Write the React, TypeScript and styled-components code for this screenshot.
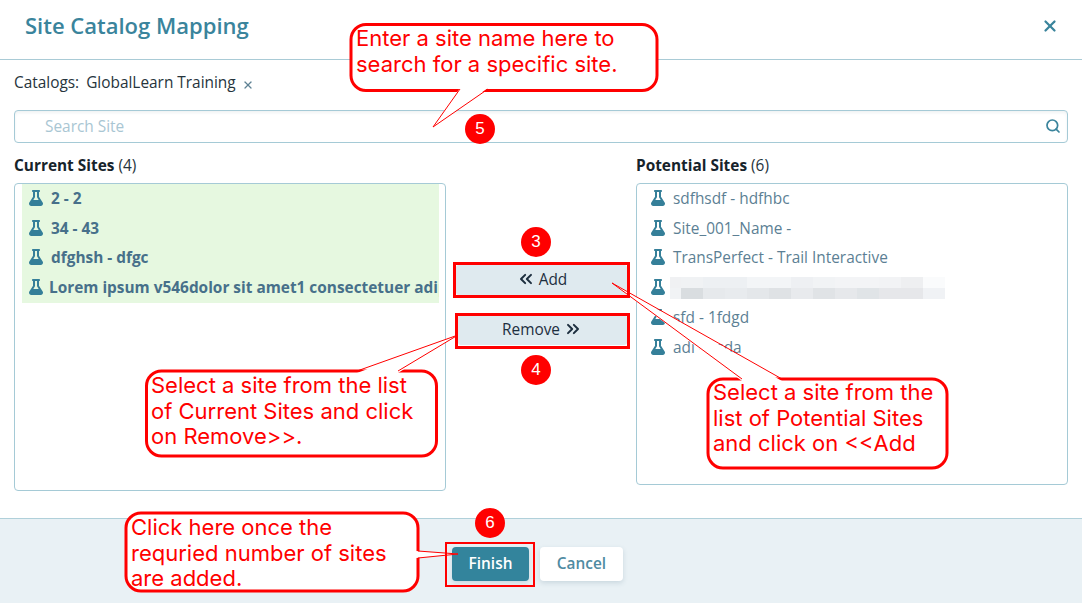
import React from "react";
import styled, { createGlobalStyle } from "styled-components";
import { FaFlask } from "react-icons/fa";
import { ChevronsLeft, ChevronsRight, Search, X } from "lucide-react";

const GlobalStyle = createGlobalStyle`
  html, body {
    margin: 0;
    padding: 0;
    background: #fff;
    font-family: "Open Sans", "Liberation Sans", sans-serif;
  }
  * { box-sizing: border-box; }
`;

const Page = styled.div`
  position: relative;
  width: 1082px;
  height: 603px;
  overflow: hidden;
  display: flex;
  flex-direction: column;
`;

const Header = styled.header`
  height: 60px;
  flex: none;
  display: flex;
  align-items: flex-start;
  justify-content: space-between;
  padding: 10px 23px 0 25px;
  border-bottom: 1px solid #a9cbd6;
`;

const Title = styled.h1`
  margin: 0;
  font-size: 22px;
  line-height: 30px;
  font-weight: 600;
  color: #3a849c;
`;

const CloseButton = styled.span`
  display: flex;
  margin-top: 7px;
  color: #3a849c;
`;

const Body = styled.main`
  flex: 1;
  padding: 0 14px;
`;

const CatalogRow = styled.div`
  display: flex;
  align-items: center;
  height: 20px;
  margin-top: 13px;
  padding-bottom: 1px;
  font-size: 15.4px;
  color: #26343c;
`;

const CatalogName = styled.span`
  margin-left: 7px;
`;

const CatalogRemove = styled.span`
  display: flex;
  margin: 4px 0 0 6px;
  color: #5f8294;
`;

const SearchBox = styled.div`
  position: relative;
  margin-top: 17px;
  height: 33px;
`;

const SearchInput = styled.input`
  width: 100%;
  height: 100%;
  padding: 0 30px 1px;
  border: 1px solid #a5cad6;
  border-radius: 4px;
  box-shadow: inset 0 2px 3px rgba(60, 100, 120, 0.08);
  font-family: inherit;
  font-size: 15.4px;
  outline: none;

  &::placeholder {
    color: #a9c6d3;
    opacity: 1;
  }
`;

const SearchIcon = styled.span`
  position: absolute;
  right: 7px;
  top: 8px;
  display: flex;
  color: #3a849c;
`;

const Columns = styled.div`
  display: grid;
  grid-template-columns: 432px 190px 432px;
  align-items: start;
  margin-top: 13px;
`;

const ColumnLabel = styled.div`
  height: 20px;
  margin-bottom: 7px;
  font-size: 15.4px;
  line-height: 19px;
  color: #26343c;

  b {
    font-weight: 700;
    color: #16232b;
  }
`;

const SiteList = styled.div<{ $height: number }>`
  height: ${(p) => p.$height}px;
  padding: 0 6px 0 7px;
  border: 1px solid #a5cad6;
  border-radius: 4px;
  overflow: hidden;
`;

const SiteRow = styled.div<{ $current?: boolean; $tight?: boolean }>`
  display: flex;
  align-items: center;
  gap: ${(p) => (p.$tight ? 6 : 8)}px;
  height: 29.8px;
  padding: 0 0 1px 7px;
  white-space: nowrap;
  overflow: hidden;
  font-size: 15.4px;
  font-weight: ${(p) => (p.$current ? 700 : 400)};
  color: ${(p) => (p.$current ? "#47708a" : "#5c7f94")};
  background: ${(p) => (p.$current ? "#e6f8e0" : "transparent")};

  svg {
    flex: none;
    width: 14px;
    height: 16px;
    margin-top: -1px;
    color: #357f99;
  }
`;

const BlurGrid = styled.div`
  display: grid;
  grid-template-columns: 11px repeat(12, 22px);
  grid-auto-rows: 11px;
  margin-left: -3px;
`;

const BlurCell = styled.span<{ $shade: string }>`
  background: ${(p) => p.$shade};
`;

const MoveColumn = styled.div`
  display: flex;
  flex-direction: column;
  align-items: flex-end;
  gap: 20px;
  padding: 109px 9px 0 0;
`;

const MoveButton = styled.button<{ $width: number }>`
  display: flex;
  align-items: center;
  justify-content: center;
  gap: 3px;
  width: ${(p) => p.$width}px;
  height: 30px;
  padding: 0 0 2px;
  border: none;
  border-radius: 3px;
  background: #dfeaef;
  font-family: inherit;
  font-size: 15.4px;
  font-weight: 500;
  color: #1d2f3f;
`;

const Footer = styled.footer`
  flex: none;
  height: 85px;
  display: flex;
  align-items: flex-start;
  gap: 11px;
  padding: 28px 0 0 452px;
  background: #e9f1f5;
  border-top: 1px solid #b0d0da;
`;

const FooterButton = styled.button<{ $primary?: boolean }>`
  height: 34px;
  width: ${(p) => (p.$primary ? 77 : 83)}px;
  padding: 0 0 2px;
  border: none;
  border-radius: 4px;
  font-family: inherit;
  font-size: 15.4px;
  font-weight: 600;
  background: ${(p) => (p.$primary ? "#33849c" : "#fff")};
  color: ${(p) => (p.$primary ? "#fff" : "#4f8ba2")};
  box-shadow: 0 2px 5px rgba(60, 100, 120, 0.18);
`;

const MarkupLayer = styled.svg`
  position: absolute;
  inset: 0;
  pointer-events: none;
`;

const CalloutText = styled.div<{ $left: number; $top: number }>`
  position: absolute;
  left: ${(p) => p.$left}px;
  top: ${(p) => p.$top}px;
  font-family: Inter, "Open Sans", sans-serif;
  font-size: 22px;
  line-height: 25.5px;
  color: #ff0000;
  white-space: pre;
`;

const StepBadge = styled.span<{ $left: number; $top: number }>`
  position: absolute;
  left: ${(p) => p.$left - 15}px;
  top: ${(p) => p.$top - 15}px;
  width: 30px;
  height: 30px;
  display: flex;
  align-items: center;
  justify-content: center;
  border-radius: 50%;
  background: #ff0000;
  color: #fff;
  font-family: "Liberation Sans", sans-serif;
  font-size: 17px;
`;

const currentSites = ["2 - 2", "34 - 43", "dfghsh - dfgc"];
const potentialTop = ["sdfhsdf - hdfhbc", "Site_001_Name -", "TransPerfect - Trail Interactive"];
const potentialBottom = ["sfd - 1fdgd", "adi - asda"];

const blurShades = [
  "#f0f1f3", "#f0f2f4", "#edf0f3", "#edf0f3", "#f3f5f7", "#f3f5f7", "#eef0f3",
  "#f1f3f5", "#f3f4f6", "#f3f4f6", "#f2f3f5", "#eeeff1", "#fafbfc",
  "#f1f3f5", "#d9dde0", "#e6e9ec", "#e8ebee", "#e4e7ea", "#dfe2e5", "#e8eaed",
  "#e0e3e6", "#e6e8eb", "#e0e4e7", "#e6e7ea", "#e6e7ea", "#f0f2f5",
];

// box = rounded outline, cover = what the tail wipes from it, tail = the thin tail lines
const bubbles = [
  { box: [351, 24.5, 306, 66], cover: "460,88 433,127 488,88", tail: "460,89 433,127 488,89" },
  { box: [146.5, 371, 290, 85], cover: "357,373 458,335 398,373", tail: "357,371 458,335 398,371" },
  { box: [708, 379, 239, 89], cover: "742,381 612,283 782,381", tail: "742,379 612,283 782,379" },
  { box: [126, 513, 292, 78], cover: "416,551 458,554 416,558", tail: "418,551 458,554 418,558" },
];

const App = () => {
  return (
    <Page>
      <GlobalStyle />
      <Header>
        <Title>Site Catalog Mapping</Title>
        <CloseButton>
          <X size={18} strokeWidth={3} />
        </CloseButton>
      </Header>

      <Body>
        <CatalogRow>
          Catalogs:
          <CatalogName>GlobalLearn Training</CatalogName>
          <CatalogRemove>
            <X size={12} strokeWidth={2.5} />
          </CatalogRemove>
        </CatalogRow>

        <SearchBox>
          <SearchInput placeholder="Search Site" readOnly />
          <SearchIcon>
            <Search size={16} strokeWidth={2.6} />
          </SearchIcon>
        </SearchBox>

        <Columns>
          <div>
            <ColumnLabel>
              <b>Current Sites</b> (4)
            </ColumnLabel>
            <SiteList $height={308}>
              {currentSites.map((name) => (
                <SiteRow key={name} $current>
                  <FaFlask />
                  {name}
                </SiteRow>
              ))}
              <SiteRow $current $tight>
                <FaFlask />
                Lorem ipsum v546dolor sit amet1 consectetuer adipiscing elit
              </SiteRow>
            </SiteList>
          </div>

          <MoveColumn>
            <MoveButton $width={171}>
              <ChevronsLeft size={20} strokeWidth={2.4} />
              Add
            </MoveButton>
            <MoveButton $width={169}>
              Remove
              <ChevronsRight size={20} strokeWidth={2.4} />
            </MoveButton>
          </MoveColumn>

          <div>
            <ColumnLabel>
              <b>Potential Sites</b> (6)
            </ColumnLabel>
            <SiteList $height={302}>
              {potentialTop.map((name) => (
                <SiteRow key={name}>
                  <FaFlask />
                  {name}
                </SiteRow>
              ))}
              <SiteRow>
                <FaFlask />
                <BlurGrid>
                  {blurShades.map((shade, i) => (
                    <BlurCell key={i} $shade={shade} />
                  ))}
                </BlurGrid>
              </SiteRow>
              {potentialBottom.map((name) => (
                <SiteRow key={name}>
                  <FaFlask />
                  {name}
                </SiteRow>
              ))}
            </SiteList>
          </div>
        </Columns>
      </Body>

      <Footer>
        <FooterButton $primary>Finish</FooterButton>
        <FooterButton>Cancel</FooterButton>
      </Footer>

      {/* tutorial markup drawn on top of the dialog */}
      <MarkupLayer width={1082} height={603} viewBox="0 0 1082 603">
        {bubbles.map(({ box: [x, y, w, h], cover, tail }) => (
          <g key={cover}>
            <rect x={x} y={y} width={w} height={h} rx={15} fill="#fff" stroke="#ff0000" strokeWidth={3} />
            <polygon points={cover} fill="#fff" />
            <polyline points={tail} fill="none" stroke="#ff0000" strokeWidth={1} />
          </g>
        ))}
        <g fill="none" stroke="#ff0000" strokeWidth={3}>
          <rect x={454.5} y={263.5} width={174} height={33} />
          <rect x={456.5} y={314.5} width={172} height={33} />
          <rect x={446} y={543} width={88} height={43} strokeWidth={2} />
        </g>
      </MarkupLayer>

      <CalloutText $left={356} $top={26}>{"Enter a site name here to\nsearch for a specific site."}</CalloutText>
      <CalloutText $left={151} $top={373}>{"Select a site from the list\nof Current Sites and click\non Remove>>."}</CalloutText>
      <CalloutText $left={713} $top={380}>{"Select a site from the\nlist of Potential Sites\nand click on <<Add"}</CalloutText>
      <CalloutText $left={131} $top={515}>{"Click here once the\nrequried number of sites\nare added."}</CalloutText>

      <StepBadge $left={480} $top={129}>5</StepBadge>
      <StepBadge $left={536} $top={242}>3</StepBadge>
      <StepBadge $left={536} $top={370}>4</StepBadge>
      <StepBadge $left={490} $top={523}>6</StepBadge>
    </Page>
  );
};

export default App;
